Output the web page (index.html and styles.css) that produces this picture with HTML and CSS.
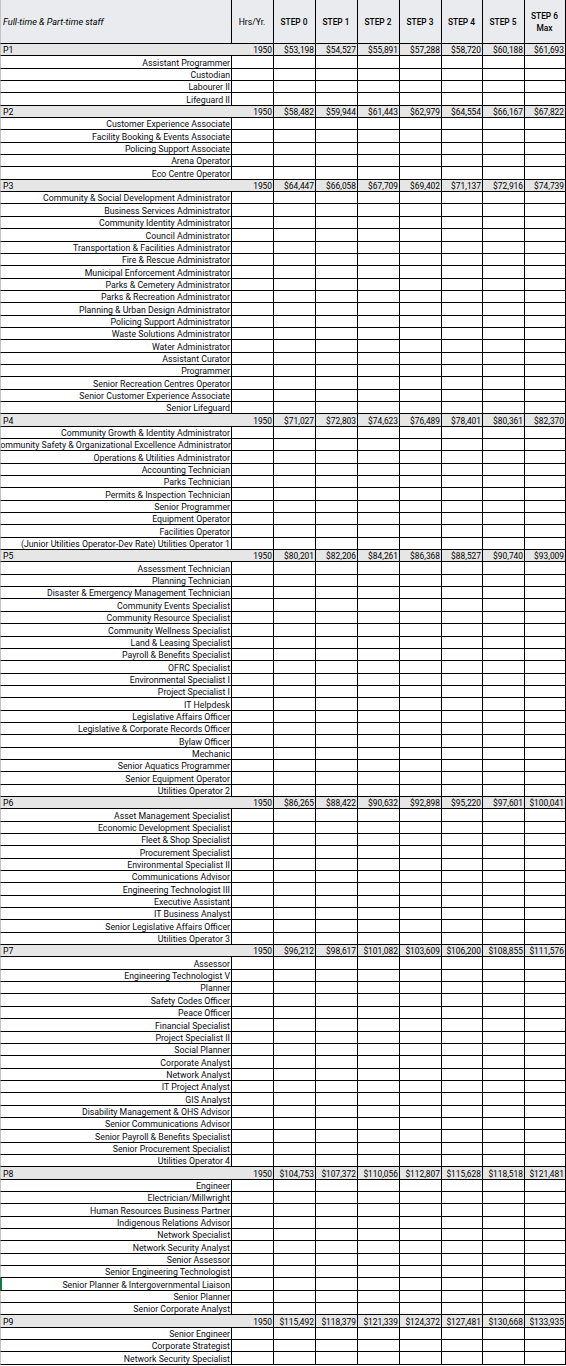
FILE: index.html
```html
<!DOCTYPE html>
<html lang="en">
<head>
<meta charset="utf-8">
<title>Full-time &amp; Part-time staff</title>
<link rel="stylesheet" href="styles.css">
</head>
<body>
<table class="sheet">
<colgroup>
<col class="c-name"><col class="c-hrs"><col class="c-s42"><col class="c-s42"><col class="c-s42"><col class="c-s42"><col class="c-s41"><col class="c-s42"><col class="c-s41">
</colgroup>
<thead>
<tr class="head">
<th class="h-title">Full-time &amp; Part-time staff</th>
<th class="h-hrs">Hrs/Yr.</th>
<th class="h-step">STEP 0</th>
<th class="h-step">STEP 1</th>
<th class="h-step">STEP 2</th>
<th class="h-step">STEP 3</th>
<th class="h-step">STEP 4</th>
<th class="h-step">STEP 5</th>
<th class="h-step">STEP 6<br>Max</th>
</tr>
</thead>
<tbody>
<tr class="grp"><td class="gname">P1</td><td>1950</td><td>$53,198</td><td>$54,527</td><td>$55,891</td><td>$57,288</td><td>$58,720</td><td>$60,188</td><td>$61,693</td></tr>
<tr><td class="job">Assistant Programmer</td><td></td><td></td><td></td><td></td><td></td><td></td><td></td><td></td></tr>
<tr><td class="job">Custodian</td><td></td><td></td><td></td><td></td><td></td><td></td><td></td><td></td></tr>
<tr><td class="job">Labourer II</td><td></td><td></td><td></td><td></td><td></td><td></td><td></td><td></td></tr>
<tr><td class="job">Lifeguard II</td><td></td><td></td><td></td><td></td><td></td><td></td><td></td><td></td></tr>
<tr class="grp"><td class="gname">P2</td><td>1950</td><td>$58,482</td><td>$59,944</td><td>$61,443</td><td>$62,979</td><td>$64,554</td><td>$66,167</td><td>$67,822</td></tr>
<tr><td class="job">Customer Experience Associate</td><td></td><td></td><td></td><td></td><td></td><td></td><td></td><td></td></tr>
<tr><td class="job">Facility Booking &amp; Events Associate</td><td></td><td></td><td></td><td></td><td></td><td></td><td></td><td></td></tr>
<tr><td class="job">Policing Support Associate</td><td></td><td></td><td></td><td></td><td></td><td></td><td></td><td></td></tr>
<tr><td class="job">Arena Operator</td><td></td><td></td><td></td><td></td><td></td><td></td><td></td><td></td></tr>
<tr><td class="job">Eco Centre Operator</td><td></td><td></td><td></td><td></td><td></td><td></td><td></td><td></td></tr>
<tr class="grp"><td class="gname">P3</td><td>1950</td><td>$64,447</td><td>$66,058</td><td>$67,709</td><td>$69,402</td><td>$71,137</td><td>$72,916</td><td>$74,739</td></tr>
<tr><td class="job">Community &amp; Social Development Administrator</td><td></td><td></td><td></td><td></td><td></td><td></td><td></td><td></td></tr>
<tr><td class="job">Business Services Administrator</td><td></td><td></td><td></td><td></td><td></td><td></td><td></td><td></td></tr>
<tr><td class="job">Community Identity Administrator</td><td></td><td></td><td></td><td></td><td></td><td></td><td></td><td></td></tr>
<tr><td class="job">Council Administrator</td><td></td><td></td><td></td><td></td><td></td><td></td><td></td><td></td></tr>
<tr><td class="job">Transportation &amp; Facilities Administrator</td><td></td><td></td><td></td><td></td><td></td><td></td><td></td><td></td></tr>
<tr><td class="job">Fire &amp; Rescue Administrator</td><td></td><td></td><td></td><td></td><td></td><td></td><td></td><td></td></tr>
<tr><td class="job">Municipal Enforcement Administrator</td><td></td><td></td><td></td><td></td><td></td><td></td><td></td><td></td></tr>
<tr><td class="job">Parks &amp; Cemetery Administrator</td><td></td><td></td><td></td><td></td><td></td><td></td><td></td><td></td></tr>
<tr><td class="job">Parks &amp; Recreation Administrator</td><td></td><td></td><td></td><td></td><td></td><td></td><td></td><td></td></tr>
<tr><td class="job">Planning &amp; Urban Design Administrator</td><td></td><td></td><td></td><td></td><td></td><td></td><td></td><td></td></tr>
<tr><td class="job">Policing Support Administrator</td><td></td><td></td><td></td><td></td><td></td><td></td><td></td><td></td></tr>
<tr><td class="job">Waste Solutions Administrator</td><td></td><td></td><td></td><td></td><td></td><td></td><td></td><td></td></tr>
<tr><td class="job">Water Administrator</td><td></td><td></td><td></td><td></td><td></td><td></td><td></td><td></td></tr>
<tr><td class="job">Assistant Curator</td><td></td><td></td><td></td><td></td><td></td><td></td><td></td><td></td></tr>
<tr><td class="job">Programmer</td><td></td><td></td><td></td><td></td><td></td><td></td><td></td><td></td></tr>
<tr><td class="job">Senior Recreation Centres Operator</td><td></td><td></td><td></td><td></td><td></td><td></td><td></td><td></td></tr>
<tr><td class="job">Senior Customer Experience Associate</td><td></td><td></td><td></td><td></td><td></td><td></td><td></td><td></td></tr>
<tr><td class="job">Senior Lifeguard</td><td></td><td></td><td></td><td></td><td></td><td></td><td></td><td></td></tr>
<tr class="grp"><td class="gname">P4</td><td>1950</td><td>$71,027</td><td>$72,803</td><td>$74,623</td><td>$76,489</td><td>$78,401</td><td>$80,361</td><td>$82,370</td></tr>
<tr><td class="job">Community Growth &amp; Identity Administrator</td><td></td><td></td><td></td><td></td><td></td><td></td><td></td><td></td></tr>
<tr><td class="job spill"><span class="ltr">Community Safety &amp; Organizational Excellence Administrator</span></td><td></td><td></td><td></td><td></td><td></td><td></td><td></td><td></td></tr>
<tr><td class="job">Operations &amp; Utilities Administrator</td><td></td><td></td><td></td><td></td><td></td><td></td><td></td><td></td></tr>
<tr><td class="job">Accounting Technician</td><td></td><td></td><td></td><td></td><td></td><td></td><td></td><td></td></tr>
<tr><td class="job">Parks Technician</td><td></td><td></td><td></td><td></td><td></td><td></td><td></td><td></td></tr>
<tr><td class="job">Permits &amp; Inspection Technician</td><td></td><td></td><td></td><td></td><td></td><td></td><td></td><td></td></tr>
<tr><td class="job">Senior Programmer</td><td></td><td></td><td></td><td></td><td></td><td></td><td></td><td></td></tr>
<tr><td class="job">Equipment Operator</td><td></td><td></td><td></td><td></td><td></td><td></td><td></td><td></td></tr>
<tr><td class="job">Facilities Operator</td><td></td><td></td><td></td><td></td><td></td><td></td><td></td><td></td></tr>
<tr><td class="job">(Junior Utilities Operator-Dev Rate) Utilities Operator 1</td><td></td><td></td><td></td><td></td><td></td><td></td><td></td><td></td></tr>
<tr class="grp"><td class="gname">P5</td><td>1950</td><td>$80,201</td><td>$82,206</td><td>$84,261</td><td>$86,368</td><td>$88,527</td><td>$90,740</td><td>$93,009</td></tr>
<tr><td class="job">Assessment Technician</td><td></td><td></td><td></td><td></td><td></td><td></td><td></td><td></td></tr>
<tr><td class="job">Planning Technician</td><td></td><td></td><td></td><td></td><td></td><td></td><td></td><td></td></tr>
<tr><td class="job">Disaster &amp; Emergency Management Technician</td><td></td><td></td><td></td><td></td><td></td><td></td><td></td><td></td></tr>
<tr><td class="job">Community Events Specialist</td><td></td><td></td><td></td><td></td><td></td><td></td><td></td><td></td></tr>
<tr><td class="job">Community Resource Specialist</td><td></td><td></td><td></td><td></td><td></td><td></td><td></td><td></td></tr>
<tr><td class="job">Community Wellness Specialist</td><td></td><td></td><td></td><td></td><td></td><td></td><td></td><td></td></tr>
<tr><td class="job">Land &amp; Leasing Specialist</td><td></td><td></td><td></td><td></td><td></td><td></td><td></td><td></td></tr>
<tr><td class="job">Payroll &amp; Benefits Specialist</td><td></td><td></td><td></td><td></td><td></td><td></td><td></td><td></td></tr>
<tr><td class="job">OFRC Specialist</td><td></td><td></td><td></td><td></td><td></td><td></td><td></td><td></td></tr>
<tr><td class="job">Environmental Specialist I</td><td></td><td></td><td></td><td></td><td></td><td></td><td></td><td></td></tr>
<tr><td class="job">Project Specialist I</td><td></td><td></td><td></td><td></td><td></td><td></td><td></td><td></td></tr>
<tr><td class="job">IT Helpdesk</td><td></td><td></td><td></td><td></td><td></td><td></td><td></td><td></td></tr>
<tr><td class="job">Legislative Affairs Officer</td><td></td><td></td><td></td><td></td><td></td><td></td><td></td><td></td></tr>
<tr><td class="job">Legislative &amp; Corporate Records Officer</td><td></td><td></td><td></td><td></td><td></td><td></td><td></td><td></td></tr>
<tr><td class="job">Bylaw Officer</td><td></td><td></td><td></td><td></td><td></td><td></td><td></td><td></td></tr>
<tr><td class="job">Mechanic</td><td></td><td></td><td></td><td></td><td></td><td></td><td></td><td></td></tr>
<tr><td class="job">Senior Aquatics Programmer</td><td></td><td></td><td></td><td></td><td></td><td></td><td></td><td></td></tr>
<tr><td class="job">Senior Equipment Operator</td><td></td><td></td><td></td><td></td><td></td><td></td><td></td><td></td></tr>
<tr><td class="job">Utilities Operator 2</td><td></td><td></td><td></td><td></td><td></td><td></td><td></td><td></td></tr>
<tr class="grp"><td class="gname">P6</td><td>1950</td><td>$86,265</td><td>$88,422</td><td>$90,632</td><td>$92,898</td><td>$95,220</td><td>$97,601</td><td>$100,041</td></tr>
<tr><td class="job">Asset Management Specialist</td><td></td><td></td><td></td><td></td><td></td><td></td><td></td><td></td></tr>
<tr><td class="job">Economic Development Specialist</td><td></td><td></td><td></td><td></td><td></td><td></td><td></td><td></td></tr>
<tr><td class="job">Fleet &amp; Shop Specialist</td><td></td><td></td><td></td><td></td><td></td><td></td><td></td><td></td></tr>
<tr><td class="job">Procurement Specialist</td><td></td><td></td><td></td><td></td><td></td><td></td><td></td><td></td></tr>
<tr><td class="job">Environmental Specialist II</td><td></td><td></td><td></td><td></td><td></td><td></td><td></td><td></td></tr>
<tr><td class="job">Communications Advisor</td><td></td><td></td><td></td><td></td><td></td><td></td><td></td><td></td></tr>
<tr><td class="job">Engineering Technologist III</td><td></td><td></td><td></td><td></td><td></td><td></td><td></td><td></td></tr>
<tr><td class="job">Executive Assistant</td><td></td><td></td><td></td><td></td><td></td><td></td><td></td><td></td></tr>
<tr><td class="job">IT Business Analyst</td><td></td><td></td><td></td><td></td><td></td><td></td><td></td><td></td></tr>
<tr><td class="job">Senior Legislative Affairs Officer</td><td></td><td></td><td></td><td></td><td></td><td></td><td></td><td></td></tr>
<tr><td class="job">Utilities Operator 3</td><td></td><td></td><td></td><td></td><td></td><td></td><td></td><td></td></tr>
<tr class="grp"><td class="gname">P7</td><td>1950</td><td>$96,212</td><td>$98,617</td><td>$101,082</td><td>$103,609</td><td>$106,200</td><td>$108,855</td><td>$111,576</td></tr>
<tr><td class="job">Assessor</td><td></td><td></td><td></td><td></td><td></td><td></td><td></td><td></td></tr>
<tr><td class="job">Engineering Technologist V</td><td></td><td></td><td></td><td></td><td></td><td></td><td></td><td></td></tr>
<tr><td class="job">Planner</td><td></td><td></td><td></td><td></td><td></td><td></td><td></td><td></td></tr>
<tr><td class="job">Safety Codes Officer</td><td></td><td></td><td></td><td></td><td></td><td></td><td></td><td></td></tr>
<tr><td class="job">Peace Officer</td><td></td><td></td><td></td><td></td><td></td><td></td><td></td><td></td></tr>
<tr><td class="job">Financial Specialist</td><td></td><td></td><td></td><td></td><td></td><td></td><td></td><td></td></tr>
<tr><td class="job">Project Specialist II</td><td></td><td></td><td></td><td></td><td></td><td></td><td></td><td></td></tr>
<tr><td class="job">Social Planner</td><td></td><td></td><td></td><td></td><td></td><td></td><td></td><td></td></tr>
<tr><td class="job">Corporate Analyst</td><td></td><td></td><td></td><td></td><td></td><td></td><td></td><td></td></tr>
<tr><td class="job">Network Analyst</td><td></td><td></td><td></td><td></td><td></td><td></td><td></td><td></td></tr>
<tr><td class="job">IT Project Analyst</td><td></td><td></td><td></td><td></td><td></td><td></td><td></td><td></td></tr>
<tr><td class="job">GIS Analyst</td><td></td><td></td><td></td><td></td><td></td><td></td><td></td><td></td></tr>
<tr><td class="job">Disability Management &amp; OHS Advisor</td><td></td><td></td><td></td><td></td><td></td><td></td><td></td><td></td></tr>
<tr><td class="job">Senior Communications Advisor</td><td></td><td></td><td></td><td></td><td></td><td></td><td></td><td></td></tr>
<tr><td class="job">Senior Payroll &amp; Benefits Specialist</td><td></td><td></td><td></td><td></td><td></td><td></td><td></td><td></td></tr>
<tr><td class="job">Senior Procurement Specialist</td><td></td><td></td><td></td><td></td><td></td><td></td><td></td><td></td></tr>
<tr><td class="job">Utilities Operator 4</td><td></td><td></td><td></td><td></td><td></td><td></td><td></td><td></td></tr>
<tr class="grp"><td class="gname">P8</td><td>1950</td><td>$104,753</td><td>$107,372</td><td>$110,056</td><td>$112,807</td><td>$115,628</td><td>$118,518</td><td>$121,481</td></tr>
<tr><td class="job">Engineer</td><td></td><td></td><td></td><td></td><td></td><td></td><td></td><td></td></tr>
<tr><td class="job">Electrician/Millwright</td><td></td><td></td><td></td><td></td><td></td><td></td><td></td><td></td></tr>
<tr><td class="job">Human Resources Business Partner</td><td></td><td></td><td></td><td></td><td></td><td></td><td></td><td></td></tr>
<tr><td class="job">Indigenous Relations Advisor</td><td></td><td></td><td></td><td></td><td></td><td></td><td></td><td></td></tr>
<tr><td class="job">Network Specialist</td><td></td><td></td><td></td><td></td><td></td><td></td><td></td><td></td></tr>
<tr><td class="job">Network Security Analyst</td><td></td><td></td><td></td><td></td><td></td><td></td><td></td><td></td></tr>
<tr><td class="job">Senior Assessor</td><td></td><td></td><td></td><td></td><td></td><td></td><td></td><td></td></tr>
<tr><td class="job">Senior Engineering Technologist</td><td></td><td></td><td></td><td></td><td></td><td></td><td></td><td></td></tr>
<tr><td class="job selected">Senior Planner &amp; Intergovernmental Liaison</td><td></td><td></td><td></td><td></td><td></td><td></td><td></td><td></td></tr>
<tr><td class="job">Senior Planner</td><td></td><td></td><td></td><td></td><td></td><td></td><td></td><td></td></tr>
<tr><td class="job">Senior Corporate Analyst</td><td></td><td></td><td></td><td></td><td></td><td></td><td></td><td></td></tr>
<tr class="grp"><td class="gname">P9</td><td>1950</td><td>$115,492</td><td>$118,379</td><td>$121,339</td><td>$124,372</td><td>$127,481</td><td>$130,668</td><td>$133,935</td></tr>
<tr><td class="job">Senior Engineer</td><td></td><td></td><td></td><td></td><td></td><td></td><td></td><td></td></tr>
<tr><td class="job">Corporate Strategist</td><td></td><td></td><td></td><td></td><td></td><td></td><td></td><td></td></tr>
<tr><td class="job">Network Security Specialist</td><td></td><td></td><td></td><td></td><td></td><td></td><td></td><td></td></tr>
</tbody>
</table>
</body>
</html>
```
FILE: styles.css
```css
html, body {
  margin: 0;
  padding: 0;
  background: #ffffff;
}

body {
  font-family: Roboto, "Liberation Sans", sans-serif;
  color: #000;
  overflow: hidden;
}

.sheet {
  table-layout: fixed;
  border-collapse: separate;
  border-spacing: 0;
  width: 566px;
}

.c-name { width: 232px; }
.c-hrs { width: 42px; }
.c-s42 { width: 42px; }
.c-s41 { width: 41px; }

.sheet th,
.sheet td {
  padding: 0 1px 0 0;
  border-right: 1px solid #000;
  border-bottom: 1px solid #000;
  white-space: nowrap;
  overflow: hidden;
  font-size: 8.4px;
  line-height: 10px;
  text-align: right;
  vertical-align: bottom;
  font-weight: 400;
}

.sheet th:first-child,
.sheet td:first-child {
  border-left: 1px solid #c4c4c4;
}

.head {
  height: 44px;
  background: #e9ebee;
}

.head th {
  vertical-align: middle;
  text-align: center;
  line-height: 12px;
}

.head .h-title {
  text-align: left;
  font-style: italic;
  padding-left: 2px;
  font-size: 9.1px;
}

.head .h-hrs {
  font-size: 8.6px;
}

.head .h-step {
  font-weight: 500;
  font-size: 8.4px;
}

.sheet tbody tr {
  height: 12.35px;
}

.grp td {
  background: #e6e6e6;
}

.grp .gname {
  text-align: left;
  padding-left: 2px;
  border-right: none;
  font-size: 8.7px;
}

.sheet td.job {
  font-size: 8.75px;
  color: #0a0a14;
}

/* long label that spills past the left edge, as in the spreadsheet */
.sheet td.spill {
  direction: rtl;
  text-align: right;
  padding-right: 0;
  padding-left: 1px;
}

.sheet td.spill .ltr {
  direction: ltr;
  unicode-bidi: isolate;
}

.sheet td.selected {
  border-left: 2px solid #217346;
}
```
